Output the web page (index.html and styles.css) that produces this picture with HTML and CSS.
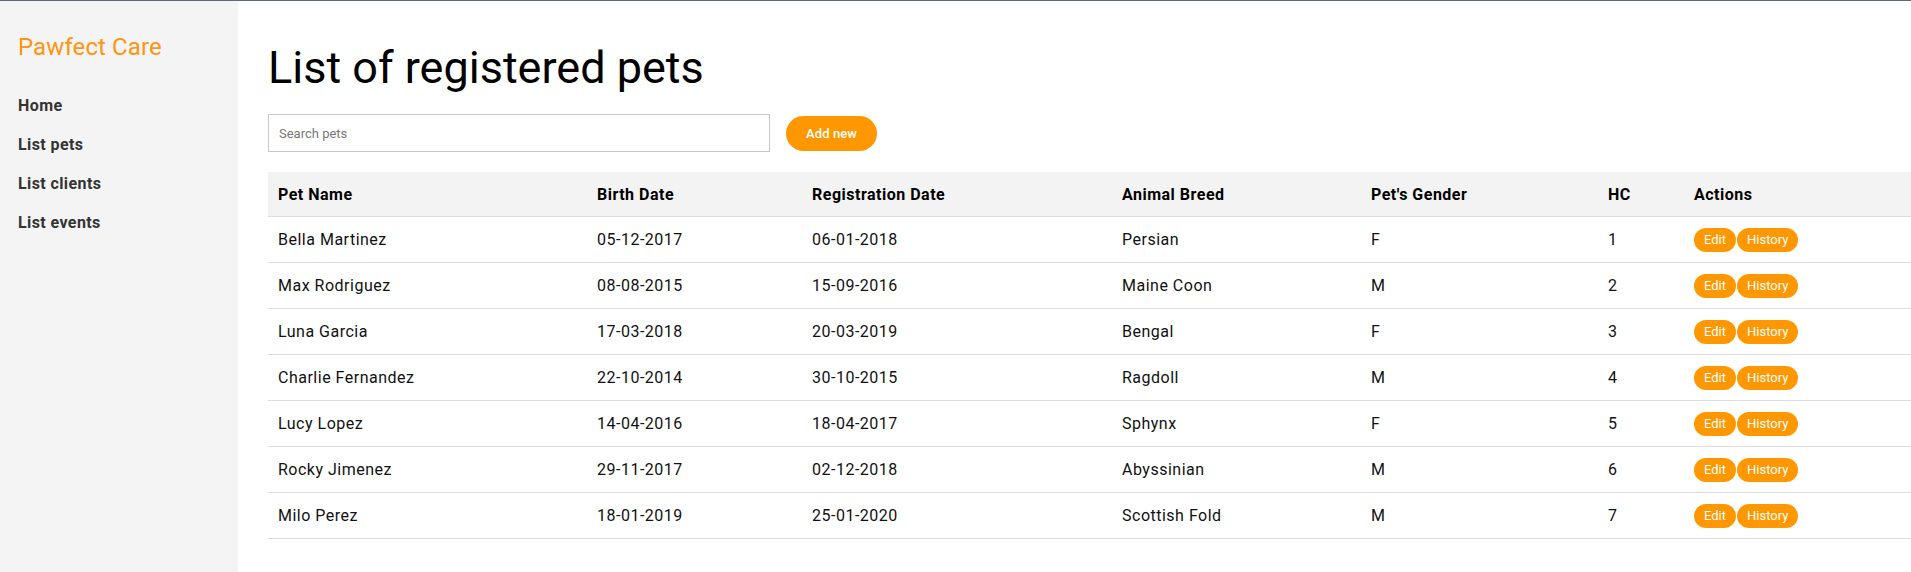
FILE: index.html
```html
<!DOCTYPE html>
<html lang="en">
<head>
<meta charset="utf-8">
<title>Pawfect Care - List of registered pets</title>
<link rel="stylesheet" href="styles.css">
</head>
<body>
<div class="layout">
  <aside class="sidebar">
    <div class="brand">Pawfect Care</div>
    <nav class="nav">
      <a class="nav-link" href="#">Home</a>
      <a class="nav-link" href="#">List pets</a>
      <a class="nav-link" href="#">List clients</a>
      <a class="nav-link" href="#">List events</a>
    </nav>
  </aside>
  <main class="main">
    <h1 class="title">List of registered pets</h1>
    <div class="toolbar">
      <input class="search" type="text" placeholder="Search pets">
      <button class="btn-add">Add new</button>
    </div>
    <table class="pets">
      <colgroup>
        <col class="c-name"><col class="c-birth"><col class="c-reg"><col class="c-breed"><col class="c-gender"><col class="c-hc"><col class="c-actions">
      </colgroup>
      <thead>
        <tr><th>Pet Name</th><th>Birth Date</th><th>Registration Date</th><th>Animal Breed</th><th>Pet's Gender</th><th>HC</th><th>Actions</th></tr>
      </thead>
      <tbody>
        <tr><td>Bella Martinez</td><td>05-12-2017</td><td>06-01-2018</td><td>Persian</td><td>F</td><td>1</td><td><div class="actions"><button class="pill">Edit</button><button class="pill">History</button></div></td></tr>
        <tr><td>Max Rodriguez</td><td>08-08-2015</td><td>15-09-2016</td><td>Maine Coon</td><td>M</td><td>2</td><td><div class="actions"><button class="pill">Edit</button><button class="pill">History</button></div></td></tr>
        <tr><td>Luna Garcia</td><td>17-03-2018</td><td>20-03-2019</td><td>Bengal</td><td>F</td><td>3</td><td><div class="actions"><button class="pill">Edit</button><button class="pill">History</button></div></td></tr>
        <tr><td>Charlie Fernandez</td><td>22-10-2014</td><td>30-10-2015</td><td>Ragdoll</td><td>M</td><td>4</td><td><div class="actions"><button class="pill">Edit</button><button class="pill">History</button></div></td></tr>
        <tr><td>Lucy Lopez</td><td>14-04-2016</td><td>18-04-2017</td><td>Sphynx</td><td>F</td><td>5</td><td><div class="actions"><button class="pill">Edit</button><button class="pill">History</button></div></td></tr>
        <tr><td>Rocky Jimenez</td><td>29-11-2017</td><td>02-12-2018</td><td>Abyssinian</td><td>M</td><td>6</td><td><div class="actions"><button class="pill">Edit</button><button class="pill">History</button></div></td></tr>
        <tr><td>Milo Perez</td><td>18-01-2019</td><td>25-01-2020</td><td>Scottish Fold</td><td>M</td><td>7</td><td><div class="actions"><button class="pill">Edit</button><button class="pill">History</button></div></td></tr>
      </tbody>
    </table>
  </main>
</div>
</body>
</html>
```

FILE: styles.css
```css
html, body {
  margin: 0;
  padding: 0;
}
body {
  font-family: Roboto, "Liberation Sans", sans-serif;
  color: #111;
  background: #fff;
  border-top: 1px solid #5f6a74;
}
.layout {
  display: flex;
  min-height: 571px;
}
.sidebar {
  width: 238px;
  flex: 0 0 238px;
  background: #f4f4f4;
  padding: 32px 18px 0;
  box-sizing: border-box;
}
.brand {
  font-size: 24px;
  color: #ff9511;
  line-height: 28px;
  letter-spacing: 0.1px;
}
.nav {
  display: flex;
  flex-direction: column;
  margin-top: 25px;
}
.nav-link {
  font-size: 16px;
  font-weight: 700;
  color: #333;
  text-decoration: none;
  padding: 10px 0;
  line-height: 19px;
  letter-spacing: 0.4px;
}
.main {
  flex: 1;
  padding-left: 30px;
  min-width: 0;
}
.title {
  font-size: 45px;
  font-weight: 400;
  margin: 40px 0 0;
  line-height: 53px;
  color: #000;
}
.toolbar {
  display: flex;
  align-items: center;
  gap: 16px;
  margin-top: 20px;
}
.search {
  width: 502px;
  height: 38px;
  box-sizing: border-box;
  border: 1px solid #c8c8c8;
  padding: 0 10px;
  font-family: Roboto, "Liberation Sans", sans-serif;
  font-size: 13px;
  color: #333;
  outline: none;
}
.search::placeholder {
  color: #777;
}
.btn-add {
  height: 35px;
  padding: 0 20px;
  border: none;
  border-radius: 18px;
  background: #ff9800;
  color: #fff;
  font-family: Roboto, "Liberation Sans", sans-serif;
  font-size: 13px;
  font-weight: 500;
  letter-spacing: 0.1px;
}
.pets {
  width: 100%;
  table-layout: fixed;
  border-collapse: collapse;
  margin-top: 20px;
}
.c-name { width: 319px; }
.c-birth { width: 215px; }
.c-reg { width: 310px; }
.c-breed { width: 249px; }
.c-gender { width: 237px; }
.c-hc { width: 86px; }
.c-actions { width: 227px; }
.pets th {
  background: #f3f3f3;
  text-align: left;
  font-size: 16px;
  font-weight: 700;
  color: #000;
  height: 44px;
  padding: 0 10px;
  letter-spacing: 0.5px;
  border-bottom: 1px solid #ddd;
}
.pets td {
  font-size: 16px;
  color: #111;
  letter-spacing: 0.5px;
  padding: 10px 10px;
  height: 25px;
  border-bottom: 1px solid #ddd;
}
.actions {
  display: flex;
  gap: 1px;
}
.pill {
  height: 24px;
  padding: 0 10px;
  border: none;
  border-radius: 12px;
  background: #ff9800;
  color: #fff;
  font-family: Roboto, "Liberation Sans", sans-serif;
  font-size: 13px;
  letter-spacing: 0;
}
```
